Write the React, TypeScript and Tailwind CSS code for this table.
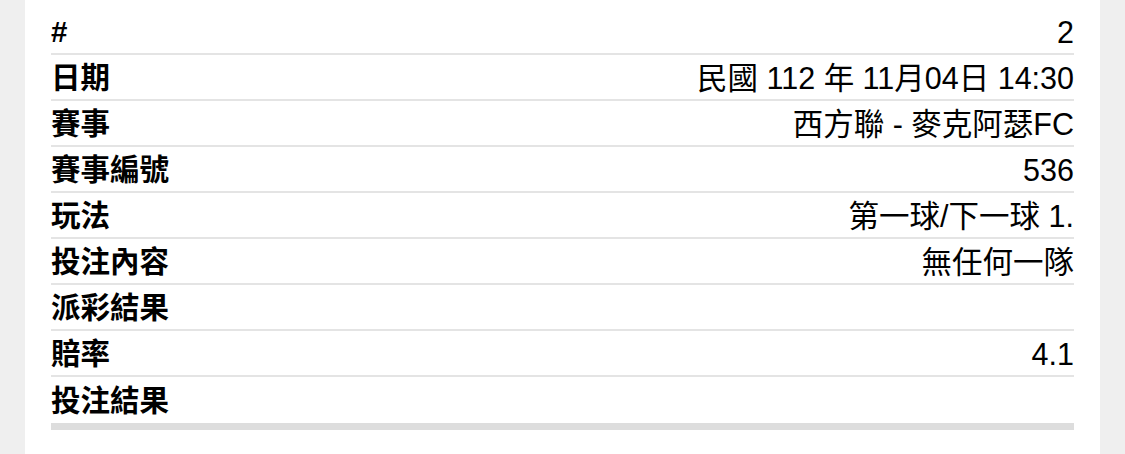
import React from "react";

const rows: [string, string][] = [
  ["#", "2"],
  ["日期", "民國 112 年 11月04日 14:30"],
  ["賽事", "西方聯 - 麥克阿瑟FC"],
  ["賽事編號", "536"],
  ["玩法", "第一球/下一球 1."],
  ["投注內容", "無任何一隊"],
  ["派彩結果", ""],
  ["賠率", "4.1"],
  ["投注結果", ""],
];

export default function App() {
  return (
    <div
      className="w-[1125px] h-[454px] bg-[#efefef] px-[25px] overflow-hidden"
      style={{ fontFamily: '"Liberation Sans", "Noto Sans CJK TC", sans-serif' }}
    >
      <div className="h-full bg-white px-[26px] pt-[9px]">
        {rows.map(([k, v], i) => (
          <div
            key={i}
            className={
              "flex items-center justify-between h-[46px] text-black leading-none " +
              (i < rows.length - 1 ? "border-b-2 border-[#e4e4e4]" : "")
            }
          >
            <span className="font-bold text-[29.5px] pt-[2px]">{k}</span>
            <span className="text-[30.5px] pt-[2px]">{v}</span>
          </div>
        ))}
        <div className="h-[7px] bg-[#dddddd]" />
      </div>
    </div>
  );
}
